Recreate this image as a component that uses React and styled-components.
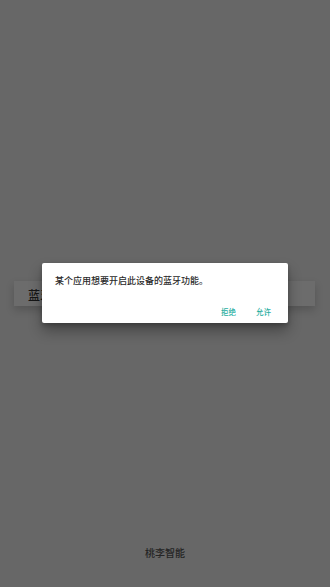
import React from 'react';
import styled, { createGlobalStyle } from 'styled-components';

const GlobalStyle = createGlobalStyle`
  html, body {
    margin: 0;
    padding: 0;
    background: #676767;
  }
  body {
    font-family: "Noto Sans CJK SC", "Noto Sans", sans-serif;
  }
`;

const Screen = styled.div`
  position: relative;
  width: 330px;
  height: 587px;
  background: #676767;
  display: flex;
  flex-direction: column;
  overflow: hidden;
`;

const Content = styled.main`
  flex: 1;
  padding-top: 281px;
`;

const Card = styled.div`
  margin: 0 15px 0 14px;
  height: 25px;
  background: #6c6c6c;
  box-shadow: 0 4px 8px rgba(0, 0, 0, 0.18);
  display: flex;
  align-items: center;
  padding: 2px 14px 0;
  box-sizing: border-box;
`;

const CardTitle = styled.span`
  font-size: 12px;
  font-weight: 500;
  color: #161616;
  line-height: 1;
`;

const Footer = styled.footer`
  text-align: center;
  padding-bottom: 28px;
  font-size: 10px;
  font-weight: 500;
  line-height: 12px;
  color: #252525;
`;

const Dialog = styled.div`
  position: absolute;
  top: 263px;
  left: 42px;
  width: 246px;
  height: 60px;
  background: #fff;
  border-radius: 2px;
  box-shadow: 0 8px 14px rgba(0, 0, 0, 0.32), 0 2px 4px rgba(0, 0, 0, 0.2);
  display: flex;
  flex-direction: column;
  box-sizing: border-box;
`;

const Message = styled.p`
  margin: 0;
  padding: 12px 13px 0;
  font-size: 9px;
  font-weight: 500;
  line-height: 12px;
  color: #2a2a2a;
`;

const Actions = styled.div`
  display: flex;
  justify-content: flex-end;
  gap: 20px;
  padding: 0 17px;
  margin-top: 20px;
`;

const ActionButton = styled.button`
  border: none;
  background: none;
  padding: 0;
  font-family: inherit;
  font-size: 7.5px;
  font-weight: 500;
  line-height: 10px;
  color: #1fae9f;
  cursor: pointer;
`;

export default function App() {
  return (
    <>
      <GlobalStyle />
      <Screen>
        <Content>
          <Card>
            <CardTitle>蓝牙设备</CardTitle>
          </Card>
        </Content>
        <Footer>桃李智能</Footer>
        <Dialog role="dialog">
          <Message>某个应用想要开启此设备的蓝牙功能。</Message>
          <Actions>
            <ActionButton>拒绝</ActionButton>
            <ActionButton>允许</ActionButton>
          </Actions>
        </Dialog>
      </Screen>
    </>
  );
}
